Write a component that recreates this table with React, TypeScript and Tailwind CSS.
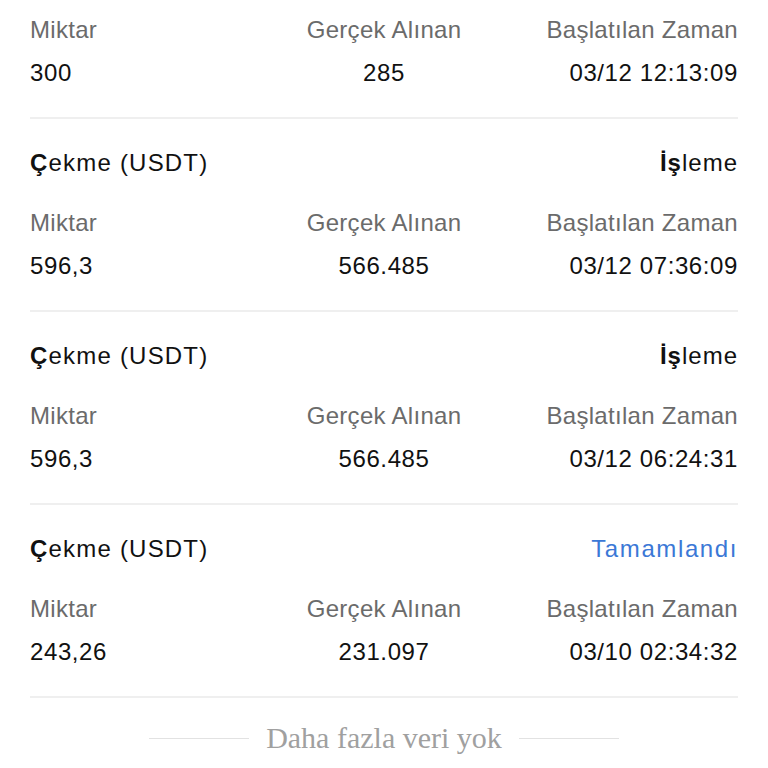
const rows = [
  { status: null, amount: "300", received: "285", time: "03/12 12:13:09" },
  { status: "processing", amount: "596,3", received: "566.485", time: "03/12 07:36:09" },
  { status: "processing", amount: "596,3", received: "566.485", time: "03/12 06:24:31" },
  { status: "done", amount: "243,26", received: "231.097", time: "03/10 02:34:32" },
];

function Status({ status }: { status: string }) {
  if (status === "done") {
    return <span className="tracking-[1.6px] text-[#3b78d6]">Tamamlandı</span>;
  }
  return (
    <span className="tracking-[1px] text-[#111]">
      <span className="font-bold">İş</span>leme
    </span>
  );
}

export default function App() {
  return (
    <div
      className="min-h-[768px] w-[768px] bg-white px-[30px] text-[24px] leading-[30px] tracking-[0.3px]"
      style={{ fontFamily: '"Liberation Sans", Arial, sans-serif' }}
    >
      {rows.map((r, i) => (
        <div
          key={i}
          className={
            i === 0
              ? "border-b-2 border-[#efefef] pt-[15px] pb-[29px]"
              : "border-b-2 border-[#efefef] pt-[29px] pb-[29px]"
          }
        >
          {r.status && (
            <div className="mb-[30px] flex items-center justify-between text-[#111]">
              <span className="tracking-[1.2px]">
                <span className="font-bold">Ç</span>ekme (USDT)
              </span>
              <Status status={r.status} />
            </div>
          )}
          <div className="grid grid-cols-3 text-[#6b6b6b]">
            <span className="text-left">Miktar</span>
            <span className="text-center">Gerçek Alınan</span>
            <span className="text-right">Başlatılan Zaman</span>
          </div>
          <div className="mt-[13px] grid grid-cols-3 text-[#111] tracking-[0.6px]">
            <span className="text-left">{r.amount}</span>
            <span className="text-center">{r.received}</span>
            <span className="text-right">{r.time}</span>
          </div>
        </div>
      ))}

      {/* Footer */}
      <div className="flex items-center justify-center gap-[17px] pt-[22px] tracking-normal">
        <div className="h-px w-[100px] bg-[#e2e2e2]" />
        <span
          className="text-[30px] leading-[36px] text-[#a0a0a0]"
          style={{ fontFamily: '"Liberation Serif", "Times New Roman", serif' }}
        >
          Daha fazla veri yok
        </span>
        <div className="h-px w-[100px] bg-[#e2e2e2]" />
      </div>
    </div>
  );
}
